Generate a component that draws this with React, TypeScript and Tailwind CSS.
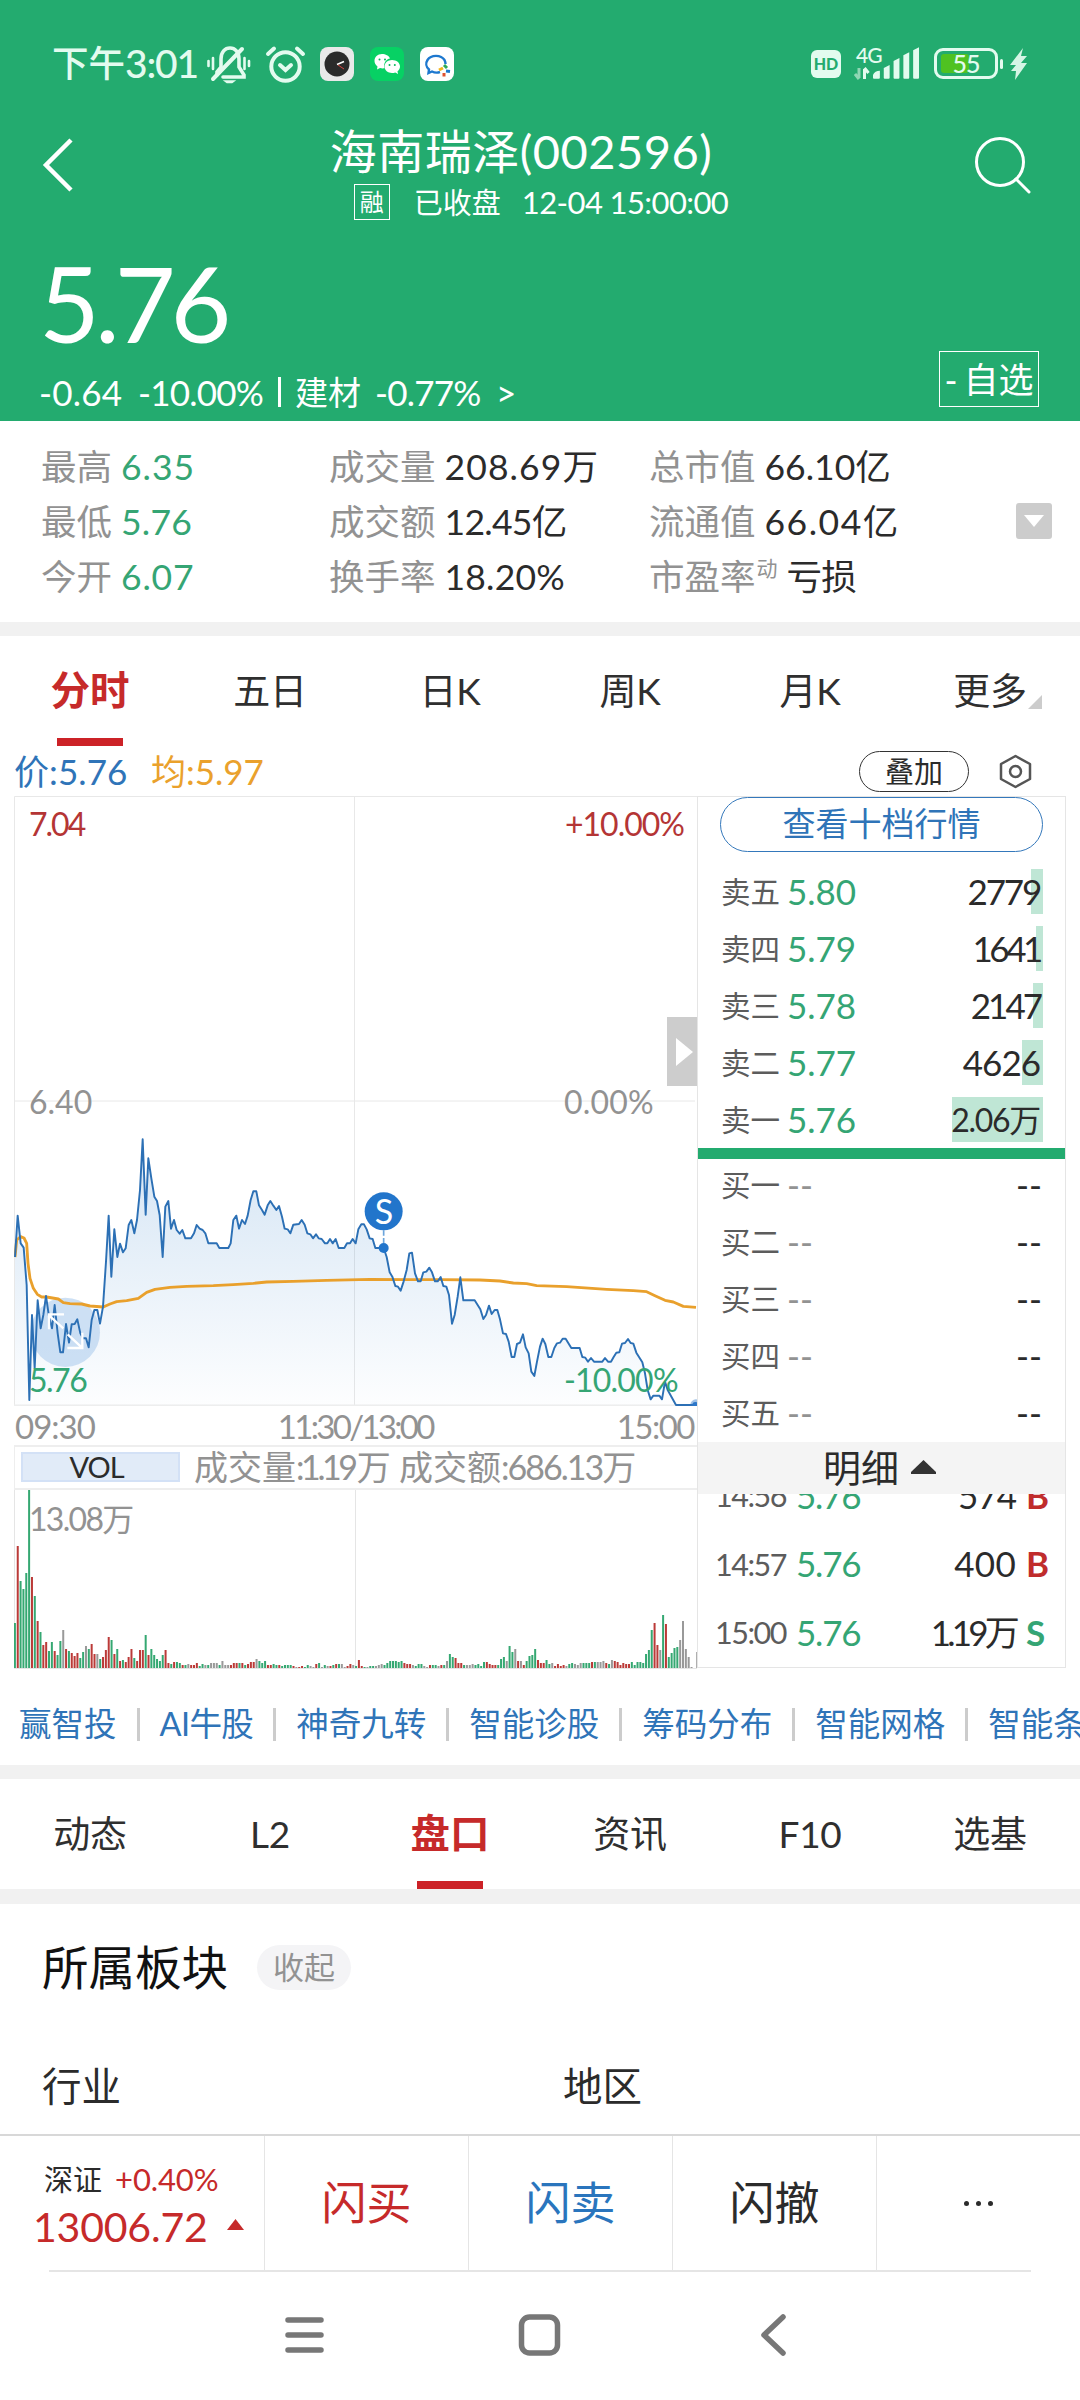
import React from 'react';

const pricePoints =
  "45,411 53,287 62,370 71,383 80,495 88,840 96,585 104,745 113,541 122,625 130,585 138,528 147,590 156,625 164,555 173,640 181,697 189,697 198,612 207,668 215,613 224,612 232,598 241,640 249,655 258,655 266,682 275,600 283,570 292,570 300,611 309,560 318,425 326,287 334,470 343,328 352,411 360,371 369,397 377,385 386,315 394,300 403,340 411,300 420,210 428,58 437,284 445,115 454,175 463,230 471,243 479,285 488,411 496,260 505,243 513,326 522,300 530,330 539,341 547,330 556,355 573,355 582,340 590,315 599,326 608,330 616,340 625,370 650,370 658,384 685,384 692,370 700,300 709,287 717,326 726,300 735,312 743,287 752,240 760,214 769,214 777,256 786,270 794,284 803,256 811,243 820,257 829,270 837,258 846,290 854,326 863,328 871,340 880,314 897,312 905,300 914,314 922,340 931,343 939,355 948,343 956,355 965,357 975,370 982,370 990,357 998,370 1007,357 1016,384 1033,384 1041,370 1050,370 1058,357 1067,370 1075,328 1084,313 1092,313 1100,328 1109,355 1118,357 1126,384 1151,384 1160,411 1169,457 1177,470 1186,498 1194,500 1202,512 1211,484 1220,450 1228,400 1236,398 1245,460 1254,484 1262,484 1270,457 1279,455 1288,443 1296,457 1305,484 1313,484 1322,471 1330,498 1339,500 1347,525 1356,611 1364,585 1373,530 1381,472 1390,541 1424,541 1441,568 1450,597 1458,585 1467,557 1475,582 1484,570 1492,570 1500,598 1509,640 1518,642 1526,665 1535,711 1543,711 1551,672 1560,668 1569,643 1577,682 1586,700 1594,755 1603,768 1611,725 1620,680 1628,656 1636,672 1645,711 1654,711 1663,684 1671,670 1680,668 1688,656 1697,656 1714,684 1739,684 1747,711 1756,713 1764,725 1773,714 1782,725 1807,725 1815,714 1824,725 1833,725 1841,711 1849,698 1858,697 1866,671 1875,669 1884,657 1892,669 1900,671 1909,698 1927,727 1935,760 1943,810 1952,838 1960,827 1978,827 1986,838 1995,785 2003,810 2028,855 2088,855";

const avgPoints =
  "45,411 50,360 62,350 72,354 80,370 84,430 90,475 100,505 112,523 125,531 140,531 175,537 190,548 210,551 245,552 270,558 310,561 330,552 350,545 380,542 415,535 440,517 465,508 510,502 560,499 640,497 700,494 760,490 800,486 880,484 980,481 1110,478 1230,479 1320,479 1440,480 1500,483 1540,489 1580,491 1610,497 1700,500 1820,508 1900,512 1940,515 1965,527 1995,541 2020,546 2050,559 2088,562";

// one entry per minute: colour (r up, g down, n flat) and bar height
const volumes =
  "g45 r122 g87 g79 g95 g178 r91 g72 r47 g36 r23 r26 g17 g26 r17 g13 g27 n38 r19 g17 r15 r12 r15 g10 g16 n22 g19 r24 r14 n14 g9 r11 r18 r31 g28 r14 g19 r7 g8 r6 r11 r19 g10 r7 r18 r18 g33 r13 g19 g13 g9 g7 g13 r18 r5 g4 r6 g6 g5 r3 g3 n4 r3 r3 r5 g2 g4 n3 g3 n5 n5 n5 g3 n7 n3 n3 r3 r5 r5 g5 r5 g3 r4 r6 r6 n9 g7 g5 g7 r3 r3 g4 g3 r3 g2 g3 g3 g3 r2 n1 r1 r2 g1 g3 n2 n1 r4 g5 n1 g3 n2 r2 g3 r4 g4 n4 n1 r2 r4 n3 g2 r8 r2 g1 n1 g2 g2 n2 n3 n4 g3 g5 g7 g7 g7 g6 g7 r5 r4 r4 n3 g2 g4 g4 n2 n1 r3 g3 g3 n2 r3 g3 n7 g14 g11 r10 r5 r5 g3 n3 n3 n4 g3 g4 g2 g6 r6 r4 r3 r3 g3 g9 g11 n7 g22 g16 n19 r7 n7 r3 g7 g12 g13 g19 r8 r5 r5 g8 g4 n5 r2 r4 r2 r3 n2 g4 g5 n4 n3 n5 g5 g5 g5 r6 g6 n6 n6 n7 r5 g4 n8 r7 r6 r3 r5 r4 r4 g6 g3 g6 g6 g5 g14 g18 g38 r45 r23 n18 g53 r44 g11 g15 g20 g21 n28 n47 n19 n11 n1 n0 n16".split(" ");

const barColors: Record<string, string> = { r: "#bb3a38", g: "#35a872", n: "#999999" };

const sells = [
  { label: "卖五", price: "5.80", amount: "2779", bar: 12, fit: "tracking-[-2.2px]" },
  { label: "卖四", price: "5.79", amount: "1641", bar: 7, fit: "tracking-[-3.4px]" },
  { label: "卖三", price: "5.78", amount: "2147", bar: 10, fit: "tracking-[-3px]" },
  { label: "卖二", price: "5.77", amount: "4626", bar: 21, fit: "tracking-[-1px]" },
  { label: "卖一", price: "5.76", amount: "2.06万", bar: 91, fit: "text-[32px] tracking-[-1.3px]" },
];

const buys = ["买一", "买二", "买三", "买四", "买五"];

const trades = [
  { time: "14:56", price: "5.76", amount: "574", side: "B", fit: "tracking-[-1px]" },
  { time: "14:57", price: "5.76", amount: "400", side: "B", fit: "tracking-[0.3px]" },
  { time: "15:00", price: "5.76", amount: "1.19万", side: "S", fit: "tracking-[-3.8px]" },
];

const links = ["赢智投", "AI牛股", "神奇九转", "智能诊股", "筹码分布", "智能网格", "智能条件单"];

function StatusBar() {
  return (
    <div className="flex h-[84px] items-end text-[#e3fbef]">
      <div className="flex h-[42px] w-[152px] items-center pl-[52px] text-[36.500px] leading-none font-medium whitespace-nowrap">
        下午<span className="text-[39px] tracking-[-1.200px]">3:01</span>
      </div>
      <svg className="ml-[54px] h-[40px] w-[250px]" viewBox="206 44 250 40" fill="none">
        <g stroke="#e3fbef" strokeWidth="3.6" strokeLinecap="round">
          <path d="M217 75V72L221 67V59C221 52 225 48 230 48C235 48 239 52 239 59V67L244 75V77H223" />
          <path d="M213 79L242 49" strokeWidth="4" />
          <path d="M208.500 61V66M213 58V69M244.500 58V69M249 61V66" strokeWidth="2.600" />
          <path d="M225 81H234L232 82.500H227Z" strokeWidth="1.500" fill="#e3fbef" />
        </g>
        <g stroke="#e3fbef" strokeWidth="4" strokeLinecap="round">
          <circle cx="285.500" cy="66.500" r="14.200" />
          <path d="M280 65L285.500 70L291 65" />
          <path d="M268 54L274 48.500M303 54L297 48.500" />
        </g>
        <rect x="320" y="47" width="34" height="34" rx="8" fill="#e9e9e9" />
        <circle cx="337" cy="64" r="12.500" fill="#2b2b2b" />
        <path d="M337 64.500L344 61.500" stroke="#fff" strokeWidth="1.600" />
        <path d="M338 65L344 69" stroke="#d9463f" strokeWidth="1" />
        <rect x="370" y="47" width="34" height="34" rx="8" fill="#07d164" />
        <path d="M382 54C377.500 54 374.500 57 374.500 61C374.500 63.300 375.700 65 377.500 66.500L377 69.500L380 68C381.500 68.500 383 68.500 384.500 68.300C383 63 386.500 59 390 58.500C389 55.500 385.500 54 382 54Z" fill="#fff" />
        <path d="M392 60C388 60 384.500 62.800 384.500 66.500C384.500 70.200 388 73 392 73C393 73 394.200 72.800 395.300 72.400L398 74L397.500 71.200C399.200 70 400 68.300 400 66.500C400 62.800 396.500 60 392 60Z" fill="#fff" />
        <g fill="#07b95a">
          <circle cx="379.500" cy="59.500" r="1" /><circle cx="385" cy="59.500" r="1" />
          <circle cx="389.500" cy="65" r="1" /><circle cx="394.800" cy="65" r="1" />
        </g>
        <rect x="420" y="47" width="34" height="34" rx="8" fill="#fff" />
        <path d="M440 72C437 73 434 72.500 432 71.500L428.500 73L429 69.500C426 67 425.500 63 427.500 60C431 54.500 441 54.500 444.500 60C445 61 445.500 62.500 445.500 64" stroke="#1d78cf" strokeWidth="2.400" />
        <path d="M444 65L447 68" stroke="#2eab58" strokeWidth="3" />
        <path d="M446 71L450 71.500" stroke="#1d78cf" strokeWidth="3" />
        <path d="M444 73V76.500" stroke="#e0512f" strokeWidth="3" />
        <path d="M439 70L443 68" stroke="#f2b51d" strokeWidth="3" />
      </svg>
      <div className="mb-[6px] ml-[355px] flex h-[28px] w-[30px] items-center justify-center rounded-[6px] bg-[#e3fbef] text-[16px] leading-none font-black text-[#23ab6f]">HD</div>
      <div className="mb-[4px] ml-[13px] flex h-[34px] w-[66px] items-end">
        <div className="flex w-[19px] flex-col">
          <span className="pl-[2px] text-[21px] leading-[17px] tracking-[-1px] whitespace-nowrap font-medium">4G</span>
          <svg className="mt-[4px] h-[13px] w-[18px]" viewBox="0 0 18 13">
            <path d="M5 1V11M5 12L1 7" stroke="#8fd6b4" strokeWidth="3" fill="none" />
            <path d="M10.500 12V2M10.500 1L14.500 6" stroke="#e3fbef" strokeWidth="3" fill="none" />
          </svg>
        </div>
        <svg className="h-[34px] w-[48px]" viewBox="0 0 48 34" fill="#e3fbef">
          <path d="M0 29Q2 25 7 25V32Q7 33 6 33H1Q0 33 0 32Z" />
          <path d="M11 22L17 19V32Q17 33 16 33H12Q11 33 11 32Z" />
          <path d="M21 15L27 12V32Q27 33 26 33H22Q21 33 21 32Z" />
          <path d="M31 9L37 6V32Q37 33 36 33H32Q31 33 31 32Z" />
          <path d="M41 4L47 1V32Q47 33 46 33H42Q41 33 41 32Z" />
        </svg>
      </div>
      <div className="relative mb-[5px] ml-[14px] flex h-[31px] w-[64px] items-center justify-center rounded-[9px] border-[3px] border-[#e3fbef] text-[25px] leading-none font-medium">
        <div className="absolute top-[3px] left-[4px] h-[19px] w-[28px] rounded-[3px] bg-[#4fc221]" />
        <span className="relative tracking-[-1px]">55</span>
      </div>
      <div className="mb-[15px] ml-[2px] h-[10px] w-[3px] rounded-full bg-[#e3fbef]" />
      <svg className="mb-[4px] ml-[7px] h-[32px] w-[18px]" viewBox="0 0 18 32">
        <path d="M13 0L0 17H6L1 23H6L5 32L17 15H11L17 8H11Z" fill="#d5f5e5" />
      </svg>
    </div>
  );
}

function Header() {
  return (
    <div className="h-[421px] bg-[#23ab6f] text-white">
      <StatusBar />
      <div className="flex h-[150px] justify-between pt-[36px]">
        <svg className="mt-[18px] ml-[40px] h-[54px] w-[36px]" viewBox="0 0 36 54" fill="none">
          <path d="M31 2L6 27L31 52" stroke="#fff" strokeWidth="4.500" />
        </svg>
        <div className="flex flex-col items-center pr-[8px]">
          <div className="h-[62px] text-[47px] leading-[62px] tracking-[0.500px]">海南瑞泽(002596)</div>
          <div className="flex h-[40px] items-center pl-[40px] text-[29px] leading-none">
            <span className="flex h-[36px] w-[36px] items-center justify-center border border-white text-[24px]">融</span>
            <span className="ml-[24px]">已收盘</span>
            <span className="ml-[21px] text-[31px] tracking-[-0.600px] whitespace-nowrap">12-04 15:00:00</span>
          </div>
        </div>
        <svg className="mt-[15px] mr-[46px] h-[62px] w-[60px]" viewBox="0 0 60 62" fill="none" stroke="#fff" strokeWidth="3">
          <circle cx="26" cy="27" r="23.500" />
          <path d="M42 44L55 57" strokeLinecap="round" />
        </svg>
      </div>
      <div className="flex">
        <div className="flex-1">
          <div className="mt-[16px] h-[116px] pl-[39px] text-[105px] leading-[105px] tracking-[-5px]">5.76</div>
          <div className="flex h-[52px] items-center pl-[39px] text-[35px] leading-none whitespace-nowrap">
            <span className="w-[99px] tracking-[0.200px]">-0.64</span>
            <span className="w-[138px] tracking-[-0.800px]">-10.00%</span>
            <span className="mr-[14px] ml-[2px] h-[30px] w-[3px] bg-white" />
            <span className="w-[80px] text-[33px]">建材</span>
            <span className="w-[121px] tracking-[-0.800px]">-0.77%</span>
            <span>&gt;</span>
          </div>
        </div>
        <div className="mt-[117px] mr-[41px] flex h-[56px] w-[100px] items-center justify-center border border-white text-[35px] leading-none">
          -<span className="ml-[6px]">自选</span>
        </div>
      </div>
    </div>
  );
}

function Stat({ name, value, fit = "tracking-[-0.700px] text-[#2b2b2b]" }: { name: React.ReactNode; value: string; fit?: string }) {
  return (
    <div className="flex h-[55px] items-center text-[35.500px] leading-none whitespace-nowrap text-[#929292]">
      {name}
      <span className={"ml-[9px] " + fit}>{value}</span>
    </div>
  );
}

function Stats() {
  return (
    <div className="flex h-[201px] pt-[18px]">
      <div className="w-[288px] pl-[41px]">
        <Stat name="最高" value="6.35" fit="tracking-[1px] text-[#35a574]" />
        <Stat name="最低" value="5.76" fit="tracking-[0.200px] text-[#35a574]" />
        <Stat name="今开" value="6.07" fit="tracking-[0.800px] text-[#35a574]" />
      </div>
      <div className="w-[320px] pl-[41px]">
        <Stat name="成交量" value="208.69万" fit="tracking-[1.100px] text-[#2b2b2b]" />
        <Stat name="成交额" value="12.45亿" />
        <Stat name="换手率" value="18.20%" fit="tracking-[0.200px] text-[#2b2b2b]" />
      </div>
      <div className="w-[408px] pl-[41px]">
        <Stat name="总市值" value="66.10亿" fit="tracking-[0px] text-[#2b2b2b]" />
        <Stat name="流通值" value="66.04亿" fit="tracking-[1.500px] text-[#2b2b2b]" />
        <Stat name={<>市盈率<span className="mb-[18px] ml-[1px] text-[21px]">动</span></>} value="亏损" />
      </div>
      <div className="mt-[64px] flex h-[36px] w-[36px] items-center justify-center rounded-[3px] bg-[#cccccc]">
        <svg className="h-[12px] w-[20px]" viewBox="0 0 20 12"><path d="M0 0H20L10 12Z" fill="#fff" /></svg>
      </div>
    </div>
  );
}

function Tabs({ items, active, more }: { items: string[]; active: number; more?: boolean }) {
  return (
    <div className="grid h-full grid-cols-6">
      {items.map((item, i) => (
        <div key={item} className="relative flex items-center justify-center pb-[2px]">
          <span className={i === active ? "text-[39.500px] leading-none font-bold text-[#c62a2a]" : "text-[37px] leading-none tracking-[-0.300px] text-[#2f2f2f]"}>{item}</span>
          {i === active && <div className="absolute bottom-0 left-[57px] h-[8px] w-[66px] bg-[#cc2227]" />}
          {more && i === 5 && (
            <svg className="absolute right-[38px] bottom-[37px] h-[14px] w-[14px]" viewBox="0 0 14 14"><path d="M14 0V14H0Z" fill="#cccccc" /></svg>
          )}
        </div>
      ))}
    </div>
  );
}

function PriceChart() {
  return (
    <div className="relative h-[610px] text-[32px] leading-none">
      <svg className="block h-[610px] w-[683px]" viewBox="14 796 683 610" fill="none">
        <defs>
          <linearGradient id="area" x1="0" y1="60" x2="0" y2="856" gradientUnits="userSpaceOnUse">
            <stop offset="0" stopColor="#2a7bc9" stopOpacity="0.2" />
            <stop offset="1" stopColor="#2a7bc9" stopOpacity="0.01" />
          </linearGradient>
        </defs>
        <path d="M14.500 1406V796.500H697M354.500 796V1406M14 1101H695" stroke="#e8e8e8" />
        <path d="M14 1405.500H697" stroke="#eeeeee" strokeWidth="2" />
        <g transform="translate(0 1120) scale(0.33333)">
          <polygon points={"45,856 " + pricePoints + " 2088,856"} fill="url(#area)" />
          <circle cx="196" cy="637" r="104" fill="#bcd5f0" fillOpacity="0.75" />
          <polyline points={avgPoints} stroke="#e9a02c" strokeWidth="8.500" strokeLinejoin="round" />
          <polyline points={pricePoints} stroke="#2c70b5" strokeWidth="5.800" strokeLinejoin="round" />
          <g stroke="#fff" strokeWidth="7">
            <path d="M190 625L149 588M147 628V583H192" />
            <path d="M203 643L245 682M202 684H247V638" />
          </g>
          <circle cx="2088" cy="855" r="17" fill="#2c76c8" fillOpacity="0.45" />
          <circle cx="2086" cy="855" r="9" fill="#2c76c8" />
          <path d="M1151 331V369" stroke="#6ca5dc" strokeWidth="5" strokeDasharray="16 7" />
          <circle cx="1151" cy="384" r="15" fill="#2275cb" />
          <circle cx="1151" cy="274" r="57" fill="#2275cb" />
        </g>
      </svg>
      <span className="absolute top-[396px] left-[351px] w-[38px] text-center text-[34px] leading-[38px] text-white">S</span>
      <span className="absolute top-[12px] left-[15px] tracking-[-2px] text-[#b43535]">7.04</span>
      <span className="absolute top-[12px] right-[13px] tracking-[-1px] text-[#b43535]">+10.00%</span>
      <span className="absolute top-[290px] left-[15px]  text-[#929292]">6.40</span>
      <span className="absolute top-[290px] left-[550px] tracking-[0.200px] text-[#929292]">0.00%</span>
      <span className="absolute top-[568px] left-[15px] tracking-[-1.500px] text-[#35a574]">5.76</span>
      <span className="absolute top-[568px] left-[550px] tracking-[-0.800px] text-[#35a574]">-10.00%</span>
      <div className="absolute top-[221px] right-0 flex h-[69px] w-[30px] items-center justify-center bg-[#cdcdcd]">
        <svg className="ml-[4px] h-[28px] w-[17px]" viewBox="0 0 17 28"><path d="M0 0L17 14L0 28Z" fill="#fff" /></svg>
      </div>
    </div>
  );
}

function VolumeChart() {
  return (
    <div className="relative h-[179px]">
      <svg className="block h-[179px] w-[683px]" viewBox="14 1489 683 179">
        <path d="M14.500 1489V1668M355.500 1489V1668M14 1667.500H698" stroke="#e5e5e5" />
        {volumes.map((v, i) => (
          <rect
            key={i}
            x={13.9 + i * 2.843}
            y={1667 - Number(v.slice(1))}
            width="2"
            height={v.slice(1)}
            fill={barColors[v[0]]}
          />
        ))}
      </svg>
      <span className="absolute top-[13px] left-[15px] text-[32px] leading-none tracking-[-1.700px] text-[#929292]">13.08万</span>
    </div>
  );
}

function ChartColumn() {
  return (
    <div className="w-[683px]">
      <PriceChart />
      <div className="flex h-[39px] items-center justify-between pt-[2px] pr-[3px] pl-[1px] text-[33px] leading-none tracking-[-1px] text-[#929292]">
        <span>09:30</span>
        <span className="pr-[1px] tracking-[-2.700px]">11:30/13:00</span>
        <span className="tracking-[-1.500px]">15:00</span>
      </div>
      <div className="flex h-[45px] items-center border-y-2 border-l border-[#eeeeee] pb-[2px] pl-[6px] text-[34px] leading-none whitespace-nowrap text-[#929292]">
        <span className="flex h-[30px] w-[159px] items-center justify-center border-2 border-[#d3e1f6] bg-[#e1ebf8] pr-[8px] text-[29px] tracking-[-1px] text-[#2b2b2b]">VOL</span>
        <span className="ml-[14px] w-[205px]">成交量<span className="tracking-[-3.400px]">:1.19</span><span className="ml-[2px]">万</span></span>
        <span>成交额<span className="tracking-[-2px]">:686.13</span>万</span>
      </div>
      <VolumeChart />
    </div>
  );
}

function OrderBook() {
  return (
    <div className="h-[872px] w-[369px] overflow-hidden border border-[#e5e5e5]">
      <div className="mx-[22px] flex h-[55px] items-center justify-center rounded-full border border-[#3478bb] pb-[2px] text-[33px] leading-none text-[#2f74b8]">查看十档行情</div>
      <div className="mt-[11px]">
        {sells.map((row) => (
          <div key={row.label} className="relative mx-[22px] flex h-[57px] items-center pl-px text-[35px] leading-none">
            <div className="absolute top-[6px] right-0 h-[45px] bg-[#bfe6d5]" style={{ width: row.bar }} />
            <span className="w-[66px] text-[29.500px] text-[#5c5c5c]">{row.label}</span>
            <span className="text-[#35a574]">{row.price}</span>
            <span className={"relative mr-[3px] ml-auto text-[#2b2b2b] " + row.fit}>{row.amount}</span>
          </div>
        ))}
      </div>
      <div className="h-[11px] bg-[#23ab6f]" />
      <div className="-mt-[3px] h-[286px]">
        {buys.map((label) => (
          <div key={label} className="mx-[22px] flex h-[57px] items-center px-px text-[29.500px] leading-none text-[#5c5c5c]">
            <span className="w-[66px]">{label}</span>
            <span className="text-[35px] text-[#929292]">--</span>
            <span className="ml-auto text-[35px] text-[#2b2b2b]">--</span>
          </div>
        ))}
      </div>
      <div className="relative z-10 flex h-[52px] items-center bg-[#f4f4f4] pb-[2px] pl-[125px] text-[38px] leading-none text-[#2b2b2b]">
        明细
        <svg className="ml-[12px] h-[14px] w-[25px]" viewBox="0 0 25 14"><path d="M12.500 0L25 12V14H0V12Z" fill="#333" /></svg>
      </div>
      <div className="-mt-[33px] h-[206px]">
        {trades.map((t) => (
          <div key={t.time} className="flex h-[68.500px] items-center pr-[18px] pl-[17px] text-[35px] leading-none">
            <span className="w-[81px] text-[30.500px] tracking-[-1.500px] text-[#5c5c5c]">{t.time}</span>
            <span className="tracking-[-1.200px] text-[#35a574]">{t.price}</span>
            <span className={"mr-[10px] ml-auto text-[#2b2b2b] " + t.fit}>{t.amount}</span>
            <span className={t.side === "B" ? "w-[21px] font-bold text-[#c02c2c]" : "w-[21px] font-bold text-[#35a574]"}>{t.side}</span>
          </div>
        ))}
      </div>
    </div>
  );
}

function BottomBar() {
  return (
    <div className="grid h-[136px] grid-cols-[265px_204px_204px_204px_1fr] border-t-2 border-[#d8d8d8] text-[45px] leading-none">
      <div className="flex flex-col border-r border-[#e5e5e5] text-[#c62a2a]">
        <div className="mt-[24px] flex h-[38px] items-center pl-[44px] text-[29px] whitespace-nowrap">
          <span className="text-[#2b2b2b]">深证</span>
          <span className="ml-[13px] text-[31px] tracking-[-0.100px]">+0.40%</span>
        </div>
        <div className="mt-[4px] flex h-[48px] items-center pl-[33px] text-[41px] tracking-[-0.200px]">
          13006.72
          <svg className="mb-[3px] ml-[19px] h-[11px] w-[17px]" viewBox="0 0 17 11"><path d="M8.500 0L17 11H0Z" fill="#c62a2a" /></svg>
        </div>
      </div>
      <div className="flex items-center justify-center border-r border-[#e5e5e5] text-[#c62a2a]">闪买</div>
      <div className="flex items-center justify-center border-r border-[#e5e5e5] text-[#2a75bd]">闪卖</div>
      <div className="flex items-center justify-center border-r border-[#e5e5e5] text-[#2b2b2b]">闪撤</div>
      <div className="flex items-center justify-center gap-[7px]">
        <span className="size-[5px] rounded-full bg-[#2b2b2b]" />
        <span className="size-[5px] rounded-full bg-[#2b2b2b]" />
        <span className="size-[5px] rounded-full bg-[#2b2b2b]" />
      </div>
    </div>
  );
}

export default function App() {
  return (
    <div className="h-[2400px] w-[1080px] overflow-hidden bg-white font-['Lato','Noto_Sans_CJK_SC',sans-serif]">
      <Header />
      <Stats />
      <div className="h-[14px] bg-[#f1f1f1]" />
      <div className="h-[110px]">
        <Tabs items={["分时", "五日", "日K", "周K", "月K", "更多"]} active={0} more />
      </div>
      <div className="flex h-[50px] items-center pl-[14px] text-[35px] leading-none">
        <span className="w-[137px] tracking-[0.100px] text-[#2f74b8]">价:5.76</span>
        <span className="text-[#eaa12c]">均:5.97</span>
        <span className="ml-auto flex h-[41px] w-[110px] items-center justify-center rounded-full border border-[#333] text-[29px] text-[#2b2b2b]">叠加</span>
        <svg className="mr-[48px] ml-[30px] h-[35px] w-[33px]" viewBox="0 0 33 35" fill="none" stroke="#555" strokeWidth="2.500">
          <path d="M16.500 2L31 10V25L16.500 33L2 25V10Z" strokeLinejoin="round" />
          <circle cx="16.500" cy="17.500" r="5.500" />
        </svg>
      </div>
      <div className="flex h-[872px] pl-[14px]">
        <ChartColumn />
        <OrderBook />
      </div>
      <div className="flex h-[97px] items-center pt-[15px] pl-[19px] text-[32.500px] leading-none whitespace-nowrap text-[#2f74b8]">
        {links.map((link, i) => (
          <React.Fragment key={link}>
            {i > 0 && <span className="mx-[20px] h-[33px] w-[3px] shrink-0 bg-[#cccccc]" />}
            <span className={i === 1 ? "tracking-[-0.600px]" : ""}>{link}</span>
          </React.Fragment>
        ))}
      </div>
      <div className="h-[14px] bg-[#f1f1f1]" />
      <div className="h-[110px]">
        <Tabs items={["动态", "L2", "盘口", "资讯", "F10", "选基"]} active={2} />
      </div>
      <div className="h-[15px] bg-[#f1f1f1]" />
      <div className="h-[230px]">
        <div className="flex h-[126px] items-center pl-[42px] text-[46.500px] leading-none text-[#111]">
          所属板块
          <span className="ml-[29px] flex h-[45px] w-[94px] items-center justify-center rounded-full bg-[#f4f4f6] text-[31px] text-[#929292]">收起</span>
        </div>
        <div className="mt-[36px] grid grid-cols-[521px_1fr] pl-[42px] text-[39.500px] leading-[40px] text-[#2b2b2b]">
          <span>行业</span>
          <span>地区</span>
        </div>
      </div>
      <BottomBar />
      <div className="mx-[49px] h-[2px] bg-[#e5e5e5]" />
      <div className="flex h-[126px] items-center justify-center pr-[9px]">
        <svg className="h-[44px] w-[504px]" viewBox="284 2313 504 44" fill="none" stroke="#777" strokeWidth="5.500" strokeLinecap="round" strokeLinejoin="round">
          <path d="M288 2320H321M288 2335H321M288 2350H321" />
          <rect x="521.500" y="2317" width="36" height="36" rx="8" />
          <path d="M783 2317L764 2335L783 2353" />
        </svg>
      </div>
    </div>
  );
}
